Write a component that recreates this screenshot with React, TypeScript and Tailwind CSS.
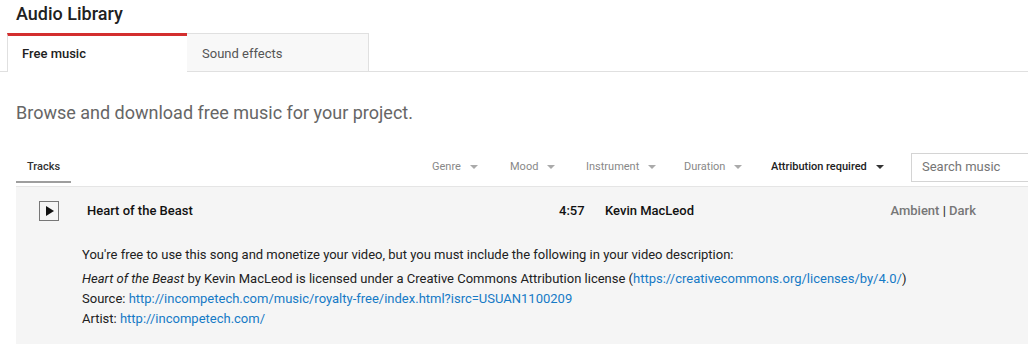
import React from 'react';

// Small down caret used by the filter dropdowns
function Caret({ dark }: { dark?: boolean }) {
  return (
    <span
      className={`inline-block w-0 h-0 border-l-[4px] border-r-[4px] border-t-[4px] border-l-transparent border-r-transparent ${
        dark ? 'border-t-[#333]' : 'border-t-[#aaa]'
      }`}
    />
  );
}

// widths taken from the spacing between dropdowns
const filters = [
  { label: 'Genre', w: 'w-[78px]' },
  { label: 'Mood', w: 'w-[76px]' },
  { label: 'Instrument', w: 'w-[98px]' },
  { label: 'Duration', w: 'w-[87px]' },
];

export default function App() {
  return (
    <div className="w-[1028px] h-[344px] bg-white overflow-hidden font-['Roboto',sans-serif] text-[#212121]">
      {/* Page title */}
      <div className="h-[33px] pl-4 pt-[2px] text-[18px] leading-[24px] font-medium text-[#212121]">
        Audio Library
      </div>

      {/* Tabs */}
      <div className="flex pl-[7px] border-b border-[#e0e0e0] h-[39px]">
        <div className="w-[180px] h-[39px] -mb-px bg-white border-t-[3px] border-t-[#d32f2f] border-l border-l-[#e0e0e0] flex items-center pl-[14px] pb-[1px] text-[13px] font-medium text-[#212121]">
          Free music
        </div>
        <div className="w-[182px] h-[38px] bg-[#f8f8f8] border-t border-r border-[#e0e0e0] flex items-center pl-[15px] pt-[2px] text-[13px] text-[#555]">
          Sound effects
        </div>
      </div>

      {/* Intro */}
      <div className="pl-4 pt-[29px] h-[80px] text-[18px] leading-[24px] text-[#666]">
        Browse and download free music for your project.
      </div>

      {/* Tracks bar with filters */}
      <div className="ml-4 h-[35px] flex items-start border-b border-[#e5e5e5] whitespace-nowrap">
        <div className="w-[55px] shrink-0 h-[34px] flex flex-col">
          <div className="h-[29px] pl-[11px] pt-[8px] text-[11px] leading-[14px] font-medium text-[#333]">Tracks</div>
          <div className="h-[2px] bg-[#9e9e9e]" />
        </div>
        <div className="ml-[361px] shrink-0 flex items-center h-[28px]">
          {filters.map(f => (
            <div key={f.label} className={`${f.w} shrink-0 flex items-center gap-[9px] pt-[2px] text-[11px] text-[#888]`}>
              <span>{f.label}</span>
              <Caret />
            </div>
          ))}
          <div className="w-[140px] shrink-0 flex items-center gap-[9px] pt-[2px] text-[11px] font-medium text-[#222]">
            <span>Attribution required</span>
            <Caret dark />
          </div>
          <div className="w-[140px] h-[29px] shrink-0 border border-[#d4d4d4] bg-white flex items-center pl-[10px] text-[13px] text-[#757575] -mb-[2px]">
            Search music
          </div>
        </div>
      </div>

      {/* Track row */}
      <div className="ml-4 bg-[#f5f5f5] h-[160px]">
        <div className="h-[48px] flex items-center whitespace-nowrap text-[13px]">
          <div className="ml-[23px] w-[20px] h-[20px] shrink-0 border border-[#777] flex items-center justify-center">
            <span className="inline-block w-0 h-0 ml-[2px] border-t-[5px] border-b-[5px] border-l-[8px] border-t-transparent border-b-transparent border-l-[#111]" />
          </div>
          <div className="ml-[28px] w-[472px] shrink-0 font-medium text-[#111]">Heart of the Beast</div>
          <div className="w-[46px] shrink-0 font-medium text-[#111]">4:57</div>
          <div className="flex-1 font-medium text-[#111]">Kevin MacLeod</div>
          <div className="pr-[52px] font-medium text-[#777]">
            Ambient <span className="text-[#333]">|</span> Dark
          </div>
        </div>
        <div className="pl-[66px] pt-[10px] text-[13px] leading-[20px] text-[#212121]">
          <div className="mb-[4px]">
            You're free to use this song and monetize your video, but you must include the following in your video description:
          </div>
          <div>
            <i>Heart of the Beast</i> by Kevin MacLeod is licensed under a Creative Commons Attribution license (
            <span className="text-[#167ac6]">https://creativecommons.org/licenses/by/4.0/</span>)
          </div>
          <div>
            Source: <span className="text-[#167ac6]">http://incompetech.com/music/royalty-free/index.html?isrc=USUAN1100209</span>
          </div>
          <div>
            Artist: <span className="text-[#167ac6]">http://incompetech.com/</span>
          </div>
        </div>
      </div>
    </div>
  );
}
